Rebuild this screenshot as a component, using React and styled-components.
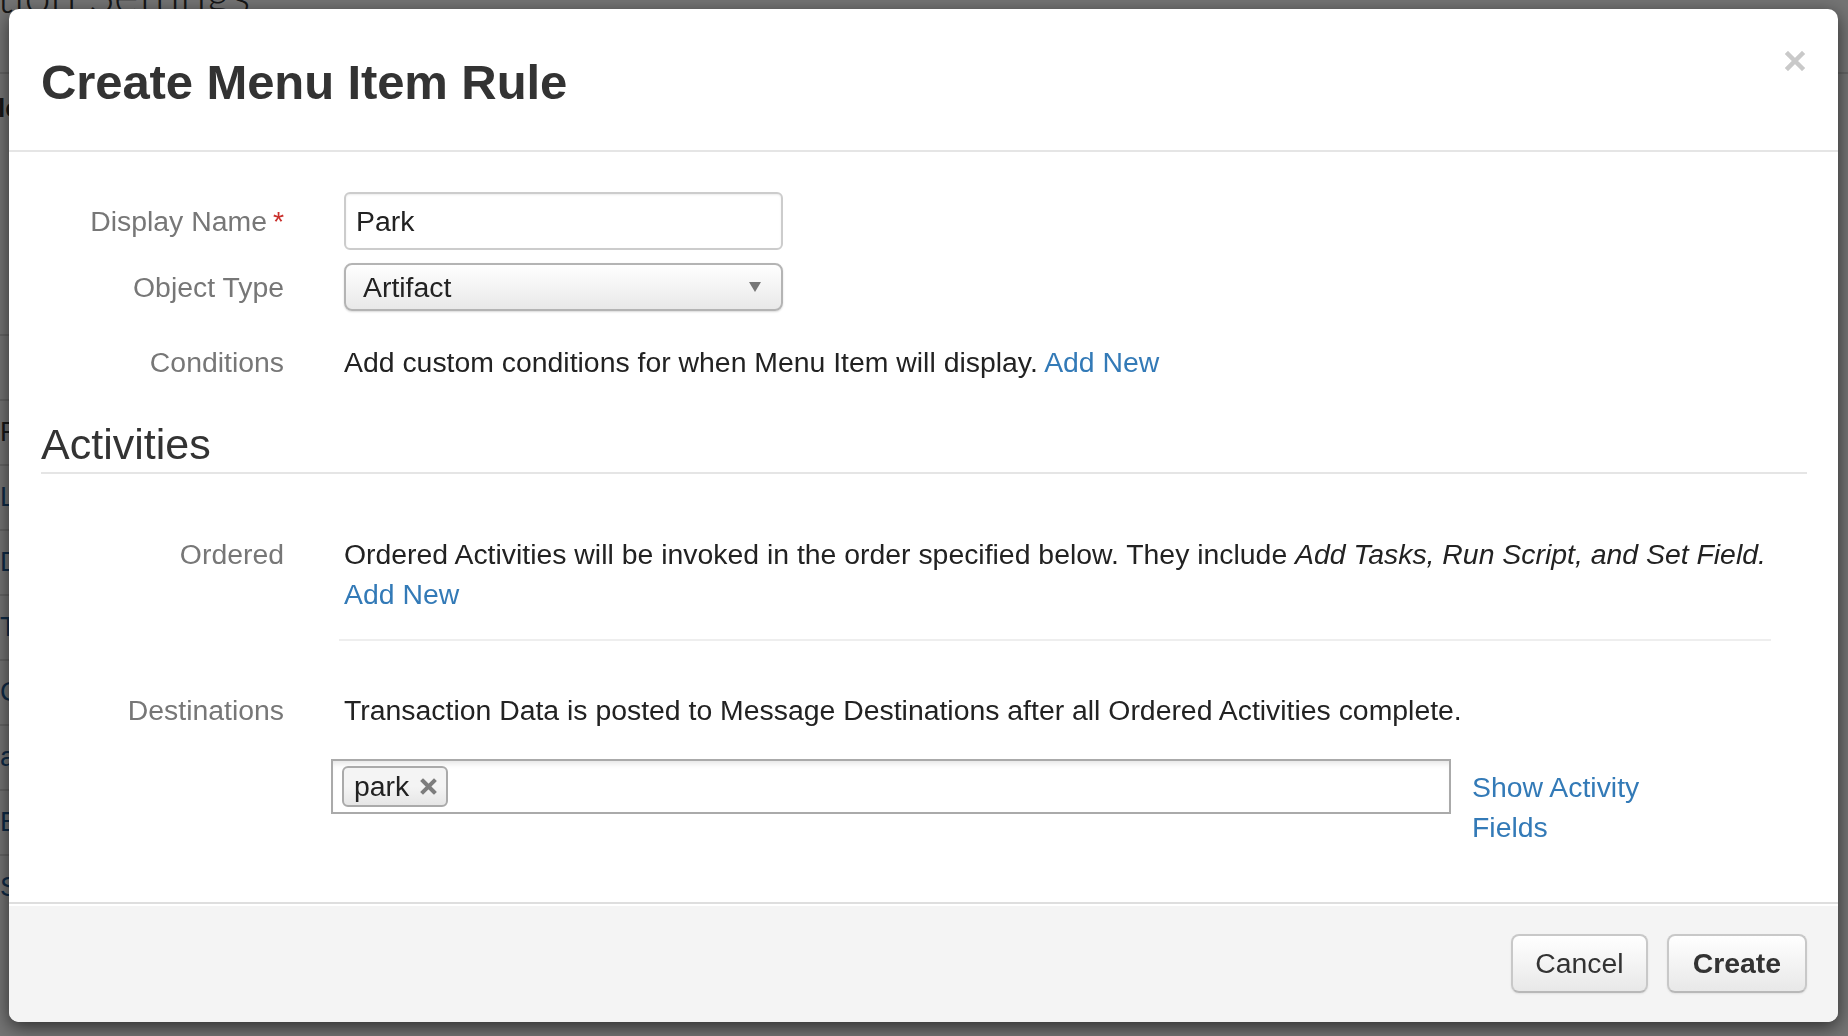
import React from "react";
import styled, { createGlobalStyle } from "styled-components";

const GlobalStyle = createGlobalStyle`
  html, body {
    margin: 0;
    padding: 0;
  }
  body {
    font-family: "Liberation Sans", Arial, sans-serif;
    overflow: hidden;
  }
  * {
    box-sizing: border-box;
  }
`;

// page behind the dialog (only a sliver shows)
const Page = styled.div`
  width: 1848px;
  height: 1036px;
  background: #fff;
  overflow: hidden;
`;

const PageTitle = styled.h1`
  margin: -28px 0 0 -3px;
  font-family: Lato, "Liberation Sans", sans-serif;
  font-weight: 300;
  font-size: 47px;
  line-height: 46px;
  color: #333;
  white-space: nowrap;
`;

const TopRule = styled.div`
  margin-top: 54px;
  height: 2px;
  background: #ddd;
`;

const PageSub = styled.div`
  margin: 19px 0 0 -2px;
  font-size: 26px;
  line-height: 30px;
  font-weight: bold;
  color: #333;
`;

const SideList = styled.ul`
  margin: 211px 0 0;
  padding: 0;
  list-style: none;
  width: 300px;
`;

const SideItem = styled.li`
  height: 65px;
  border-top: 2px solid #ddd;
  display: flex;
  align-items: center;
  font-size: 27px;
  color: ${(p) => (p.$head ? "#333" : "#1f5c99")};
`;

const Overlay = styled.div`
  position: fixed;
  inset: 0;
  background: rgba(0, 0, 0, 0.55);
  padding: 9px 10px 14px 9px;
  display: flex;
`;

const Modal = styled.div`
  flex: 1;
  display: flex;
  flex-direction: column;
  background: #fff;
  border-radius: 10px;
  box-shadow: 0 5px 18px rgba(0, 0, 0, 0.6);
  overflow: hidden;
`;

const Header = styled.div`
  height: 143px;
  padding: 0 33px 0 32px;
  display: flex;
  align-items: center;
  border-bottom: 2px solid #e5e5e5;
`;

const Title = styled.h2`
  flex: 1;
  margin: 4px 0 0;
  font-size: 49px;
  font-weight: bold;
  color: #333;
  letter-spacing: -0.1px;
`;

const Close = styled.button`
  align-self: flex-start;
  margin-top: 42px;
  padding: 0;
  border: 0;
  background: none;
  cursor: pointer;
  display: flex;
`;

const Body = styled.div`
  flex: 1;
  padding: 40px 31px 0 32px;
`;

const Row = styled.div`
  display: grid;
  grid-template-columns: 243px 1fr;
  column-gap: 60px;
  align-items: ${(p) => p.$align || "center"};
  margin-top: ${(p) => p.$top || 0}px;
`;

const Label = styled.label`
  text-align: right;
  font-size: 28.4px;
  line-height: 40px;
  color: #777;
`;

const Required = styled.span`
  color: #c9302c;
  margin-left: 6px;
`;

const TextInput = styled.input`
  width: 439px;
  height: 58px;
  padding: 0 10px;
  border: 2px solid #ccc;
  border-radius: 6px;
  box-shadow: inset 0 1px 2px rgba(0, 0, 0, 0.08);
  font-family: inherit;
  font-size: 28.4px;
  color: #222;
  outline: none;
`;

const Select = styled.div`
  width: 439px;
  height: 48px;
  padding: 0 20px 0 17px;
  border: 2px solid #b4b4b4;
  border-radius: 8px;
  background: linear-gradient(#ffffff, #e9e9e9);
  box-shadow: 0 1px 2px rgba(0, 0, 0, 0.15);
  display: flex;
  align-items: center;
  justify-content: space-between;
  font-size: 28.4px;
  color: #222;
`;

const Text = styled.div`
  font-size: 28.4px;
  line-height: 40px;
  color: #222;
`;

const Link = styled.a`
  color: #337ab7;
  text-decoration: none;
  display: ${(p) => (p.$block ? "block" : "inline")};
`;

const SectionTitle = styled.h3`
  margin: 39px 0 0;
  padding-bottom: 5px;
  border-bottom: 2px solid #e5e5e5;
  font-size: 43px;
  line-height: 46px;
  font-weight: normal;
  color: #333;
`;

const Divider = styled.div`
  height: 2px;
  background: #eee;
  margin: 25px 36px 0 -5px;
`;

const TagRow = styled.div`
  display: flex;
  align-items: flex-start;
  gap: 21px;
  margin: 29px 0 0 -13px;
`;

const TagBox = styled.div`
  width: 1120px;
  height: 55px;
  padding: 0 9px;
  border: 2px solid #aaa;
  background: #fff;
  box-shadow: inset 0 6px 6px -4px rgba(0, 0, 0, 0.12);
  display: flex;
  align-items: center;
`;

const Tag = styled.span`
  height: 41px;
  padding: 0 9px 0 10px;
  border: 2px solid #aaa;
  border-radius: 6px;
  background: linear-gradient(#f4f4f4 50%, #e6e6e6);
  display: flex;
  align-items: center;
  gap: 11px;
  font-size: 28.4px;
  color: #222;
`;

const SideLink = styled(Link)`
  width: 190px;
  margin-top: 8px;
  font-size: 28.4px;
  line-height: 40px;
`;

const Footer = styled.div`
  height: 120px;
  padding: 0 31px;
  background: #f4f4f4;
  border-top: 2px solid #dedede;
  box-shadow: inset 0 2px 0 #fff;
  display: flex;
  align-items: center;
  justify-content: flex-end;
  gap: 19px;
`;

const Button = styled.button`
  height: 59px;
  padding: ${(p) => (p.$primary ? "0 24px" : "0 22px")};
  border: 2px solid #c8c8c8;
  border-bottom-color: #b8b8b8;
  border-radius: 8px;
  background: linear-gradient(#ffffff, #e8e8e8);
  box-shadow: 0 1px 2px rgba(0, 0, 0, 0.08);
  font-family: inherit;
  font-size: 28.4px;
  font-weight: ${(p) => (p.$primary ? "bold" : "normal")};
  color: #333;
  cursor: pointer;
`;

const sideItems = [
  { text: "", head: false },
  { text: "Rules", head: true },
  { text: "Links", head: false },
  { text: "Data", head: false },
  { text: "Tasks", head: false },
  { text: "Configs", head: false },
  { text: "activity", head: false },
  { text: "Events", head: false },
  { text: "Scripts", head: false },
];

const App = () => {
  return (
    <>
      <GlobalStyle />
      <Page>
        <PageTitle>tion Settings</PageTitle>
        <TopRule />
        <PageSub>le</PageSub>
        <SideList>
          {sideItems.map((item, i) => (
            <SideItem key={i} $head={item.head}>
              {item.text}
            </SideItem>
          ))}
        </SideList>
      </Page>

      <Overlay>
        <Modal>
          <Header>
            <Title>Create Menu Item Rule</Title>
            <Close aria-label="Close">
              <svg width="20" height="20" viewBox="0 0 20 20">
                <path
                  d="M3 3 L17 17 M17 3 L3 17"
                  stroke="#c9c9c9"
                  strokeWidth="4.5"
                  strokeLinecap="square"
                />
              </svg>
            </Close>
          </Header>

          <Body>
            <Row>
              <Label>
                Display Name<Required>*</Required>
              </Label>
              <TextInput defaultValue="Park" />
            </Row>
            <Row $top={13}>
              <Label>Object Type</Label>
              <Select>
                <span>Artifact</span>
                <svg width="12" height="10" viewBox="0 0 12 10">
                  <path d="M0 0 H12 L6 10 Z" fill="#777" />
                </svg>
              </Select>
            </Row>
            <Row $top={31}>
              <Label>Conditions</Label>
              <Text>
                Add custom conditions for when Menu Item will display.{" "}
                <Link href="#">Add New</Link>
              </Text>
            </Row>

            <SectionTitle>Activities</SectionTitle>

            <Row $top={60} $align="start">
              <Label>Ordered</Label>
              <div>
                <Text>
                  Ordered Activities will be invoked in the order specified
                  below. They include{" "}
                  <em>Add Tasks, Run Script, and Set Field.</em>
                  <Link href="#" $block>
                    Add New
                  </Link>
                </Text>
                <Divider />
              </div>
            </Row>

            <Row $top={49} $align="start">
              <Label>Destinations</Label>
              <div>
                <Text>
                  Transaction Data is posted to Message Destinations after all
                  Ordered Activities complete.
                </Text>
                <TagRow>
                  <TagBox>
                    <Tag>
                      park
                      <svg width="17" height="17" viewBox="0 0 17 17">
                        <path
                          d="M3 3 L14 14 M14 3 L3 14"
                          stroke="#7d7d7d"
                          strokeWidth="4"
                          strokeLinecap="square"
                        />
                      </svg>
                    </Tag>
                  </TagBox>
                  <SideLink href="#">Show Activity Fields</SideLink>
                </TagRow>
              </div>
            </Row>
          </Body>

          <Footer>
            <Button>Cancel</Button>
            <Button $primary>Create</Button>
          </Footer>
        </Modal>
      </Overlay>
    </>
  );
};

export default App;
